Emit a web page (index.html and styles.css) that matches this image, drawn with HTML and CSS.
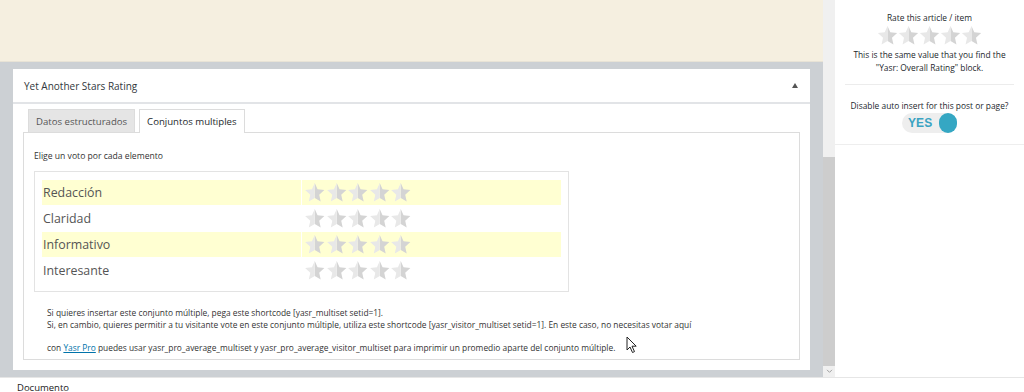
FILE: index.html
```html
<!DOCTYPE html>
<html lang="es">
<head>
<meta charset="utf-8">
<title>Yasr</title>
<link rel="stylesheet" href="styles.css">
</head>
<body>
<svg width="0" height="0" class="defs">
  <defs>
    <symbol id="star" viewBox="0 0 24 24">
      <polygon points="12,1 15.2,8.4 23,9.2 17.1,14.5 18.8,22.3 12,18.3" fill="#d4d4d4"/>
      <polygon points="12,1 8.8,8.4 1,9.2 6.9,14.5 5.2,22.3 12,18.3" fill="#e8e8e8"/>
    </symbol>
  </defs>
</svg>
<div class="screen">
  <div class="editor">
    <div class="notice"></div>
    <div class="metabox-area">
      <div class="panel">
        <div class="panel-head">
          <span class="panel-title">Yet Another Stars Rating</span>
          <span class="toggle-arrow"></span>
        </div>
        <div class="panel-body">
          <div class="tabs">
            <div class="tab">Datos estructurados</div>
            <div class="tab active">Conjuntos multiples</div>
          </div>
          <div class="tab-content">
            <p class="intro">Elige un voto por cada elemento</p>
            <div class="set-box">
              <div class="set-row alt"><span class="set-label">Redacción</span><span class="stars"><svg><use href="#star"/></svg><svg><use href="#star"/></svg><svg><use href="#star"/></svg><svg><use href="#star"/></svg><svg><use href="#star"/></svg></span></div>
              <div class="set-row"><span class="set-label">Claridad</span><span class="stars"><svg><use href="#star"/></svg><svg><use href="#star"/></svg><svg><use href="#star"/></svg><svg><use href="#star"/></svg><svg><use href="#star"/></svg></span></div>
              <div class="set-row alt"><span class="set-label">Informativo</span><span class="stars"><svg><use href="#star"/></svg><svg><use href="#star"/></svg><svg><use href="#star"/></svg><svg><use href="#star"/></svg><svg><use href="#star"/></svg></span></div>
              <div class="set-row"><span class="set-label">Interesante</span><span class="stars"><svg><use href="#star"/></svg><svg><use href="#star"/></svg><svg><use href="#star"/></svg><svg><use href="#star"/></svg><svg><use href="#star"/></svg></span></div>
            </div>
            <div class="notes">
              <p>Si quieres insertar este conjunto múltiple, pega este shortcode [yasr_multiset setid=1].<br>Si, en cambio, quieres permitir a tu visitante vote en este conjunto múltiple, utiliza este shortcode [yasr_visitor_multiset setid=1]. En este caso, no necesitas votar aquí</p>
              <p>con <a href="#">Yasr Pro</a> puedes usar yasr_pro_average_multiset y yasr_pro_average_visitor_multiset para imprimir un promedio aparte del conjunto múltiple.</p>
            </div>
          </div>
        </div>
      </div>
    </div>
  </div>
  <div class="scrollbar">
    <div class="thumb"></div>
    <div class="track"></div>
    <div class="arrow-down"><svg viewBox="0 0 8 6" width="7" height="5"><polyline points="1,1 4,4 7,1" fill="none" stroke="#a0a0a0" stroke-width="1.2"/></svg></div>
  </div>
  <aside class="sidebar">
    <div class="side-section">
      <div class="side-title">Rate this article / item</div>
      <div class="side-stars"><svg><use href="#star"/></svg><svg><use href="#star"/></svg><svg><use href="#star"/></svg><svg><use href="#star"/></svg><svg><use href="#star"/></svg></div>
      <div class="side-text">This is the same value that you find the<br>"Yasr: Overall Rating" block.</div>
    </div>
    <div class="side-section second">
      <div class="side-title">Disable auto insert for this post or page?</div>
      <div class="switch"><span class="switch-label">YES</span><span class="knob"></span></div>
    </div>
  </aside>
</div>
<footer class="status">Documento</footer>
<svg class="cursor" width="12" height="18" viewBox="0 0 12 18"><path d="M1 1 L1 14 L4 11 L6.5 16.5 L8.5 15.6 L6 10.2 L10.2 10.2 Z" fill="#fff" stroke="#222" stroke-width="1"/></svg>
</body>
</html>
```
FILE: styles.css
```css
* { box-sizing: border-box; }
html, body { margin: 0; padding: 0; }
body {
  width: 1024px;
  height: 392px;
  overflow: hidden;
  background: #fff;
  font-family: "Open Sans", "Noto Sans", sans-serif;
  color: #444;
  position: relative;
}
.defs { position: absolute; }
.screen {
  display: grid;
  grid-template-columns: 823px 12px 189px;
  height: 378px;
  border-bottom: 1px solid #e6e6e6;
}
.editor { display: flex; flex-direction: column; min-height: 0; }
.notice { height: 62px; flex: none; background: #f5efe0; border-bottom: 1px solid #e8e3d6; }
.metabox-area {
  flex: 1;
  min-height: 0;
  background: #ccd0d4;
  padding: 7px 13px 7px 13px;
}
.panel { background: #fff; height: 100%; display: flex; flex-direction: column; }
.panel-head {
  height: 35px;
  flex: none;
  border-bottom: 2px solid #e2e4e7;
  display: flex;
  align-items: center;
  justify-content: space-between;
  padding: 0 11px 0 11px;
}
.panel-title { font-size: 10px; color: #32373c; }
.toggle-arrow {
  width: 0; height: 0;
  border-left: 3.5px solid transparent;
  border-right: 3.5px solid transparent;
  border-bottom: 5px solid #555;
  margin-right: 1px;
}
.panel-body { flex: 1; min-height: 0; padding: 5px 10px 10px 10px; display: flex; flex-direction: column; }
.tabs { display: flex; gap: 4px; padding-left: 5px; margin-bottom: -1px; }
.tab {
  font-size: 9.6px;
  padding: 0 7px;
  height: 24px;
  line-height: 23px;
  border: 1px solid #dcdcdc;
  border-bottom: none;
  background: #e5e5e5;
  color: #555;
}
.tab.active { background: #fff; color: #23282d; position: relative; z-index: 1; height: 24px; }
.tab-content {
  flex: 1;
  min-height: 0;
  border: 1px solid #dcdcdc;
  padding: 17px 11px 0 10px;
}
.intro { margin: 0 0 9px 0; font-size: 8.6px; color: #333; line-height: 12px; }
.set-box {
  width: 535px;
  border: 1px solid #e3e3e3;
  padding: 8px 7px 8px 7px;
  display: flex;
  flex-direction: column;
  gap: 1px;
}
.set-row {
  height: 25px;
  display: grid;
  grid-template-columns: 259px 1fr;
  align-items: center;
  gap: 1px;
}
.set-row.alt .set-label, .set-row.alt .stars { background: #ffffd2; }
.set-label { font-size: 12.4px; color: #555; padding-left: 1px; height: 25px; line-height: 26px; }
.stars { display: flex; height: 25px; align-items: center; padding-left: 2px; }
.stars svg { width: 21.5px; height: 21px; }
.notes { padding: 15px 0 0 13px; font-size: 8.4px; color: #333; line-height: 12px; }
.notes p { margin: 0 0 11px 0; }
.notes p:last-child { margin-bottom: 0; }
.notes a { color: #0073aa; text-decoration: underline; }
.scrollbar { display: flex; flex-direction: column; background: #f0f0f0; }
.thumb { height: 157px; background: #f0f0f0; }
.track { flex: 1; background: #cdcdcd; }
.arrow-down { height: 11px; display: flex; align-items: center; justify-content: center; background: #f0f0f0; }
.sidebar { background: #fff; }
.side-section {
  display: flex;
  flex-direction: column;
  align-items: center;
  padding: 12px 0 10px 0;
  margin: 0 10px;
  border-bottom: 1px solid #ececec;
  text-align: center;
  font-size: 8.4px;
  color: #23282d;
}
.side-section.second { margin: 0; padding: 15px 0 11px 0; border-bottom: 1px solid #eeeeee; }
.side-title { line-height: 12px; }
.side-stars { display: flex; margin: 1px 0 2px 0; }
.side-stars svg { width: 21px; height: 21px; }
.side-text { line-height: 13px; }
.switch {
  margin-top: 1px;
  width: 55px;
  height: 20px;
  border-radius: 10px;
  background: #eeeeee;
  display: flex;
  align-items: center;
  justify-content: space-between;
  padding-left: 6px;
}
.switch-label { font-family: "Liberation Sans", Arial, sans-serif; font-size: 12px; color: #3aa3c2; font-weight: bold; letter-spacing: 0.1px; }
.knob { width: 18px; height: 20px; border-radius: 9px; background: #35a7c3; }
.status { font-size: 9.5px; color: #222; padding: 4px 0 0 17px; line-height: 12px; }
.cursor { position: absolute; left: 626px; top: 336px; }
```
